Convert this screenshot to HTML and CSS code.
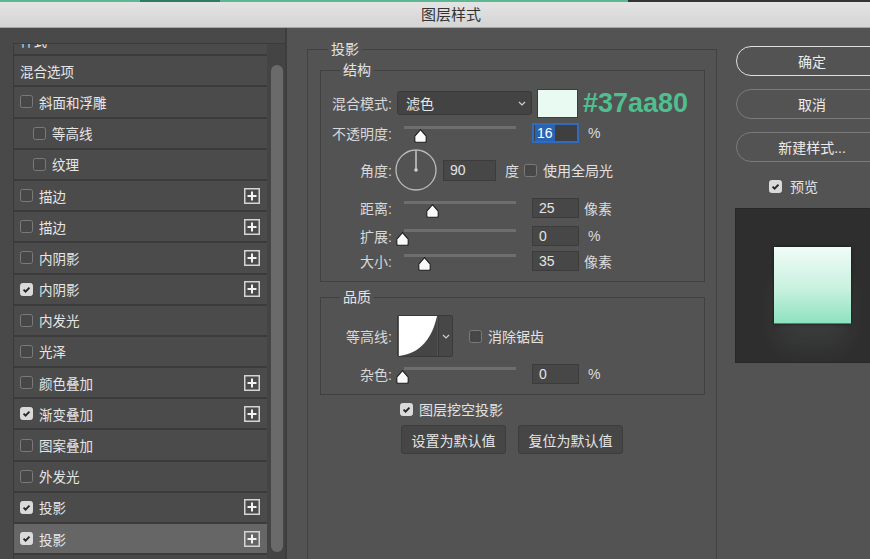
FILE: index.html
```html
<!DOCTYPE html>
<html lang="zh-CN">
<head>
<meta charset="utf-8">
<title>图层样式</title>
<link rel="stylesheet" href="styles.css">
</head>
<body>
<div class="topline"></div>
<header class="titlebar">图层样式</header>
<main class="dialog">
  <aside class="sidebar">
    <div class="listframe">
      <ul class="list">
        <li class="item head"><span class="name">样式</span></li>
        <li class="item"><span class="name">混合选项</span></li>
        <li class="item"><span class="cb"></span><span class="name">斜面和浮雕</span></li>
        <li class="item sub"><span class="cb"></span><span class="name">等高线</span></li>
        <li class="item sub"><span class="cb"></span><span class="name">纹理</span></li>
        <li class="item"><span class="cb"></span><span class="name">描边</span><svg class="plus" viewBox="0 0 16 16"><rect x="0.75" y="0.75" width="14.5" height="14.5" fill="none" stroke="#d4d4d4" stroke-width="1.5"/><path d="M8 3.5v9M3.5 8h9" stroke="#f2f2f2" stroke-width="2"/></svg></li>
        <li class="item"><span class="cb"></span><span class="name">描边</span><svg class="plus" viewBox="0 0 16 16"><rect x="0.75" y="0.75" width="14.5" height="14.5" fill="none" stroke="#d4d4d4" stroke-width="1.5"/><path d="M8 3.5v9M3.5 8h9" stroke="#f2f2f2" stroke-width="2"/></svg></li>
        <li class="item"><span class="cb"></span><span class="name">内阴影</span><svg class="plus" viewBox="0 0 16 16"><rect x="0.75" y="0.75" width="14.5" height="14.5" fill="none" stroke="#d4d4d4" stroke-width="1.5"/><path d="M8 3.5v9M3.5 8h9" stroke="#f2f2f2" stroke-width="2"/></svg></li>
        <li class="item"><span class="cb on"><svg viewBox="0 0 13 13"><path d="M3 6.6l2.4 2.4L10 4.2" fill="none" stroke="#262626" stroke-width="2.2"/></svg></span><span class="name">内阴影</span><svg class="plus" viewBox="0 0 16 16"><rect x="0.75" y="0.75" width="14.5" height="14.5" fill="none" stroke="#d4d4d4" stroke-width="1.5"/><path d="M8 3.5v9M3.5 8h9" stroke="#f2f2f2" stroke-width="2"/></svg></li>
        <li class="item"><span class="cb"></span><span class="name">内发光</span></li>
        <li class="item"><span class="cb"></span><span class="name">光泽</span></li>
        <li class="item"><span class="cb"></span><span class="name">颜色叠加</span><svg class="plus" viewBox="0 0 16 16"><rect x="0.75" y="0.75" width="14.5" height="14.5" fill="none" stroke="#d4d4d4" stroke-width="1.5"/><path d="M8 3.5v9M3.5 8h9" stroke="#f2f2f2" stroke-width="2"/></svg></li>
        <li class="item"><span class="cb on"><svg viewBox="0 0 13 13"><path d="M3 6.6l2.4 2.4L10 4.2" fill="none" stroke="#262626" stroke-width="2.2"/></svg></span><span class="name">渐变叠加</span><svg class="plus" viewBox="0 0 16 16"><rect x="0.75" y="0.75" width="14.5" height="14.5" fill="none" stroke="#d4d4d4" stroke-width="1.5"/><path d="M8 3.5v9M3.5 8h9" stroke="#f2f2f2" stroke-width="2"/></svg></li>
        <li class="item"><span class="cb"></span><span class="name">图案叠加</span></li>
        <li class="item"><span class="cb"></span><span class="name">外发光</span></li>
        <li class="item"><span class="cb on"><svg viewBox="0 0 13 13"><path d="M3 6.6l2.4 2.4L10 4.2" fill="none" stroke="#262626" stroke-width="2.2"/></svg></span><span class="name">投影</span><svg class="plus" viewBox="0 0 16 16"><rect x="0.75" y="0.75" width="14.5" height="14.5" fill="none" stroke="#d4d4d4" stroke-width="1.5"/><path d="M8 3.5v9M3.5 8h9" stroke="#f2f2f2" stroke-width="2"/></svg></li>
        <li class="item selected"><span class="cb on"><svg viewBox="0 0 13 13"><path d="M3 6.6l2.4 2.4L10 4.2" fill="none" stroke="#262626" stroke-width="2.2"/></svg></span><span class="name">投影</span><svg class="plus" viewBox="0 0 16 16"><rect x="0.75" y="0.75" width="14.5" height="14.5" fill="none" stroke="#d4d4d4" stroke-width="1.5"/><path d="M8 3.5v9M3.5 8h9" stroke="#f2f2f2" stroke-width="2"/></svg></li>
      </ul>
      <div class="scroll"><div class="scroll-thumb"></div></div>
    </div>
  </aside>

  <section class="content">
    <fieldset class="group outer">
      <legend class="legend-outer">投影</legend>

      <fieldset class="group inner struct">
        <legend class="legend-inner">结构</legend>
        <div class="row r1">
          <span class="lbl">混合模式:</span>
          <div class="select"><span>滤色</span><svg class="chev" viewBox="0 0 8 5"><path d="M1 1l3 3 3-3" fill="none" stroke="#cfcfcf" stroke-width="1.2"/></svg></div>
          <div class="swatch"></div>
          <span class="hex">#37aa80</span>
        </div>
        <div class="row r2">
          <span class="lbl">不透明度:</span>
          <div class="slider"><div class="track"></div><svg class="knob" style="left:16px" viewBox="0 0 13 14"><path d="M6.5 0.7L12.2 7.2V12Q12.2 13.3 10.9 13.3H2.1Q0.8 13.3 0.8 12V7.2Z" fill="#fafafa" stroke="#1e1e1e" stroke-width="1.1"/></svg></div>
          <span class="field focus"><span class="sel">16</span></span>
          <span class="unit pct">%</span>
        </div>
        <div class="row r3">
          <span class="lbl">角度:</span>
          <svg class="dial" viewBox="0 0 42 42"><circle cx="21" cy="21" r="20" fill="none" stroke="#bcbcbc" stroke-width="1.3"/><line x1="21" y1="21" x2="21" y2="2" stroke="#d2d2d2" stroke-width="1.4"/><circle cx="21" cy="21" r="1.8" fill="#d2d2d2"/></svg>
          <span class="field wide">90</span>
          <span class="unit deg">度</span>
          <span class="cb"></span>
          <span class="cbtext">使用全局光</span>
        </div>
        <div class="row r4">
          <span class="lbl">距离:</span>
          <div class="slider"><div class="track"></div><svg class="knob" style="left:28px" viewBox="0 0 13 14"><path d="M6.5 0.7L12.2 7.2V12Q12.2 13.3 10.9 13.3H2.1Q0.8 13.3 0.8 12V7.2Z" fill="#fafafa" stroke="#1e1e1e" stroke-width="1.1"/></svg></div>
          <span class="field">25</span>
          <span class="unit">像素</span>
        </div>
        <div class="row r5">
          <span class="lbl">扩展:</span>
          <div class="slider"><div class="track"></div><svg class="knob" style="left:-2px" viewBox="0 0 13 14"><path d="M6.5 0.7L12.2 7.2V12Q12.2 13.3 10.9 13.3H2.1Q0.8 13.3 0.8 12V7.2Z" fill="#fafafa" stroke="#1e1e1e" stroke-width="1.1"/></svg></div>
          <span class="field">0</span>
          <span class="unit pct">%</span>
        </div>
        <div class="row r6">
          <span class="lbl">大小:</span>
          <div class="slider"><div class="track"></div><svg class="knob" style="left:20px" viewBox="0 0 13 14"><path d="M6.5 0.7L12.2 7.2V12Q12.2 13.3 10.9 13.3H2.1Q0.8 13.3 0.8 12V7.2Z" fill="#fafafa" stroke="#1e1e1e" stroke-width="1.1"/></svg></div>
          <span class="field">35</span>
          <span class="unit">像素</span>
        </div>
      </fieldset>

      <fieldset class="group inner quality">
        <legend class="legend-inner">品质</legend>
        <div class="row q1">
          <span class="lbl">等高线:</span>
          <div class="contour">
            <svg class="curve" viewBox="0 0 40 42"><rect width="40" height="42" fill="#454545"/><path d="M0 0H40C35 22 24 39 0 42Z" fill="#ffffff"/></svg>
            <span class="contour-drop"><svg class="chev" viewBox="0 0 8 5"><path d="M1 1l3 3 3-3" fill="none" stroke="#cfcfcf" stroke-width="1.2"/></svg></span>
          </div>
          <span class="cb aa"></span>
          <span class="cbtext">消除锯齿</span>
        </div>
        <div class="row q2">
          <span class="lbl">杂色:</span>
          <div class="slider"><div class="track"></div><svg class="knob" style="left:-2px" viewBox="0 0 13 14"><path d="M6.5 0.7L12.2 7.2V12Q12.2 13.3 10.9 13.3H2.1Q0.8 13.3 0.8 12V7.2Z" fill="#fafafa" stroke="#1e1e1e" stroke-width="1.1"/></svg></div>
          <span class="field">0</span>
          <span class="unit pct">%</span>
        </div>
      </fieldset>

      <div class="knockout">
        <span class="cb on"><svg viewBox="0 0 13 13"><path d="M3 6.6l2.4 2.4L10 4.2" fill="none" stroke="#262626" stroke-width="2.2"/></svg></span>
        <span class="cbtext">图层挖空投影</span>
      </div>
      <div class="defaults">
        <span class="btn">设置为默认值</span>
        <span class="btn">复位为默认值</span>
      </div>
    </fieldset>
  </section>

  <aside class="actions">
    <div class="pill primary">确定</div>
    <div class="pill">取消</div>
    <div class="pill">新建样式...</div>
    <div class="preview-toggle">
      <span class="cb on"><svg viewBox="0 0 13 13"><path d="M3 6.6l2.4 2.4L10 4.2" fill="none" stroke="#262626" stroke-width="2.2"/></svg></span>
      <span class="cbtext">预览</span>
    </div>
    <div class="preview"><div class="sample"></div></div>
  </aside>
</main>
</body>
</html>
```

FILE: styles.css
```css
* { box-sizing: border-box; }
html, body { margin: 0; padding: 0; }
body {
  width: 870px;
  height: 559px;
  overflow: hidden;
  background: #535353;
  font-family: "Liberation Sans", "Noto Sans CJK SC", sans-serif;
  color: #e2e2e2;
}

.topline {
  height: 2px;
  background: linear-gradient(90deg, #5cb892 0, #5cb892 140px, #2f7a63 140px, #2f7a63 220px, #5cb892 220px, #5cb892 628px, #343434 628px);
}
.titlebar {
  height: 26px;
  border-bottom: 1px solid #a6a6a6;
  background: linear-gradient(#e4e4e4, #d4d4d4);
  color: #333;
  font-size: 15px;
  line-height: 25px;
  text-align: center;
  padding-left: 32px;
}

.dialog { display: flex; height: 531px; overflow: hidden; }

/* ---------- left list ---------- */
.sidebar {
  flex: 0 0 287px;
  background: #494949;
  padding: 15px 0 0 13px;
  border-right: 2px solid #3d3d3d;
}
.listframe {
  display: flex;
  height: 100%;
  border-top: 1px solid #3a3a3a;
  border-left: 1px solid #3a3a3a;
}
.list {
  flex: 0 0 253px;
  margin: 0;
  padding: 0;
  list-style: none;
  overflow: hidden;
}
.item {
  height: 31.2px;
  display: flex;
  align-items: center;
  padding: 0 7px 0 6px;
  background: #4b4b4b;
  border-bottom: 2px solid #3b3b3b;
  font-size: 13.5px;
  color: #e6e6e6;
}
.item.head { margin-top: -19px; }
.item.sub { padding-left: 19px; }
.item.selected { background: #666666; }
.item .name { margin-left: 6px; }
.item.head .name, .item:nth-child(2) .name { margin-left: 0; }
.plus { width: 16px; height: 16px; margin-left: auto; }

.scroll {
  flex: 1;
  background: #444444;
  padding: 21px 2px 0 4px;
}
.scroll-thumb {
  width: 12px;
  height: 487px;
  border-radius: 6px;
  background: #6a6a6a;
}

/* ---------- checkboxes ---------- */
.cb {
  flex: none;
  width: 13px;
  height: 13px;
  border-radius: 2.5px;
  border: 1px solid #7a7a7a;
  background: #474747;
  display: inline-flex;
}
.cb.on { background: #dadada; border-color: #dadada; }
.cb svg { width: 11px; height: 11px; }
.cbtext { margin-left: 6px; font-size: 14px; color: #e2e2e2; }

/* ---------- middle ---------- */
.content {
  flex: 0 0 449px;
  padding: 13px 0 0 20px;
  overflow: hidden;
}
.group {
  margin: 0;
  border: 1px solid #414141;
  min-width: 0;
}
.outer {
  width: 410px;
  height: 530px;
  padding: 5px 11px 0 12px;
}
.inner { padding: 0 0 7px 0; }
.struct { padding-top: 10px; }
.quality { margin-top: 7px; padding-top: 10px; }

legend {
  font-size: 14px;
  line-height: 16px;
  padding: 0 3px;
  color: #e4e4e4;
}
.legend-outer { margin-left: 8px; }
.legend-inner { margin-left: 19px; }

.row { display: flex; align-items: center; }
.r1 { height: 30px; }
.r2 { height: 30px; }
.r3 { height: 44px; }
.r4 { height: 31px; }
.r5 { height: 25px; }
.r6 { height: 26px; }
.q1 { height: 42px; }
.q2 { height: 26px; margin-top: 4px; }

.lbl {
  flex: none;
  width: 71px;
  margin-right: 5px;
  text-align: right;
  font-size: 14px;
  color: #d8d8d8;
}

.select {
  width: 135px;
  height: 24px;
  background: #434343;
  border: 1px solid #3a3a3a;
  border-radius: 3px;
  display: flex;
  align-items: center;
  padding: 0 5px 0 8px;
  font-size: 14px;
  color: #e8e8e8;
}
.chev { width: 8px; height: 5px; margin-left: auto; }
.swatch {
  width: 41px;
  height: 29px;
  margin-left: 5px;
  background: #e8faf1;
  border: 1px solid #3c3c3c;
}
.hex {
  margin-left: 5px;
  font-size: 27px;
  font-weight: bold;
  color: #4fbf8f;
}

.slider {
  position: relative;
  flex: none;
  width: 130px;
  height: 20px;
  margin-right: 5px;
}
.track {
  margin: 3px 0 0 7px;
  width: 112px;
  height: 3px;
  background: #6e6e6e;
}
.knob {
  position: absolute;
  top: 6px;
  width: 13px;
  height: 14px;
  margin-left: 1px;
}

.field {
  flex: none;
  width: 47px;
  height: 20px;
  background: #474747;
  border: 1px solid #3c3c3c;
  font-size: 14px;
  line-height: 18px;
  padding-left: 6px;
  color: #e4e4e4;
}
.field.focus {
  border: 2px solid #2f6cc0;
  background: #3f3f3f;
  padding-left: 1px;
  line-height: 16px;
}
.field.focus .sel {
  display: inline-block;
  background: #2a63b2;
  color: #fff;
  padding: 0 2px;
}
.field.wide { width: 53px; height: 21px; margin-left: 6px; }
.unit { margin-left: 5px; font-size: 14px; color: #dcdcdc; }
.unit.pct { margin-left: 9px; }
.unit.deg { margin-left: 9px; margin-right: 5px; }
.dial { width: 42px; height: 42px; margin-left: -2px; flex: none; }

.contour {
  display: flex;
  height: 42px;
  border: 1px solid #3a3a3a;
  border-radius: 2px;
}
.curve { width: 40px; height: 40px; display: block; }
.contour-drop {
  width: 14px;
  background: #474747;
  display: flex;
  align-items: center;
  justify-content: center;
  border-left: 1px solid #3a3a3a;
}
.contour-drop .chev { margin: 0; }
.cb.aa { margin-left: 16px; }

.knockout {
  display: flex;
  align-items: center;
  height: 16px;
  margin: 6px 0 0 80px;
}
.defaults {
  display: flex;
  gap: 12px;
  margin: 8px 0 0 81px;
}
.btn {
  width: 105px;
  height: 29px;
  background: #464646;
  border: 1px solid #3d3d3d;
  border-radius: 3px;
  display: flex;
  align-items: center;
  justify-content: center;
  font-size: 14px;
  color: #e4e4e4;
}

/* ---------- right ---------- */
.actions {
  flex: none;
  width: 152px;
  padding-top: 18px;
}
.pill {
  height: 30px;
  border-radius: 15px;
  border: 1px solid #7b7b7b;
  display: flex;
  align-items: center;
  justify-content: center;
  font-size: 14px;
  color: #ececec;
  margin-bottom: 13px;
}
.pill.primary { border: 1.5px solid #e0e0e0; }
.pill:nth-child(3) { margin-bottom: 0; }
.preview-toggle {
  display: flex;
  align-items: center;
  height: 16px;
  margin-top: 16px;
  padding-left: 33px;
}
.preview-toggle .cbtext { margin-left: 8px; }
.preview {
  width: 155px;
  height: 155px;
  margin: 14px 0 0 -1px;
  background: #2e2e2e;
  border: 1px solid #282828;
  display: flex;
  align-items: center;
  justify-content: center;
}
.sample {
  width: 77px;
  height: 77px;
  background: linear-gradient(#f0fcf7, #c8f1df 55%, #8de2be);
  border-bottom: 1px solid #3c8c6e;
  box-shadow: 0 0 3px rgba(0, 0, 0, 0.55), 0 26px 26px -4px rgba(230, 255, 245, 0.07);
}
```
